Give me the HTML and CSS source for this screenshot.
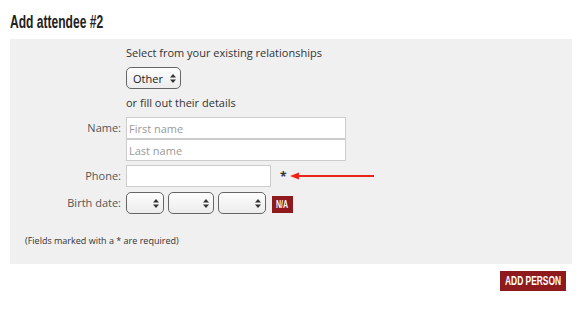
FILE: index.html
```html
<!DOCTYPE html>
<html lang="en">
<head>
    <meta charset="UTF-8">
    <meta name="viewport" content="width=device-width, initial-scale=1.0">
    <title>Add attendee</title>
    <link rel="stylesheet" href="styles.css">
</head>
<body>
    <div class="page">
        <h1><span class="squeeze title">Add attendee #2</span></h1>

        <!-- Attendee form -->
        <div class="attendee-box">
            <div class="form-grid">
                <div></div>
                <div class="text-row">Select from your existing relationships</div>

                <div></div>
                <div class="select-row">
                    <span class="select-wrap w-other">
                        <select><option>Other</option></select>
                        <svg class="updown" width="6" height="9" viewBox="0 0 6 9"><path d="M0 3.5L3 0L6 3.5Z M0 5.5L3 9L6 5.5Z" fill="#333"/></svg>
                    </span>
                </div>

                <div></div>
                <div class="text-row">or fill out their details</div>

                <label class="label">Name:</label>
                <div class="name-fields">
                    <input type="text" class="input wide" placeholder="First name">
                    <input type="text" class="input wide" placeholder="Last name">
                </div>

                <label class="label">Phone:</label>
                <div class="phone-row">
                    <input type="text" class="input phone">
                    <span class="required">*</span>
                    <svg class="arrow" width="84" height="10" viewBox="0 0 84 10">
                        <path d="M0 5L9 1.5L9 8.5Z" fill="#ee2218"/>
                        <rect x="8" y="4" width="76" height="2" fill="#ee2218"/>
                    </svg>
                </div>

                <label class="label date-label">Birth date:</label>
                <div class="date-row">
                    <span class="select-wrap w-day">
                        <select><option></option></select>
                        <svg class="updown" width="6" height="9" viewBox="0 0 6 9"><path d="M0 3.5L3 0L6 3.5Z M0 5.5L3 9L6 5.5Z" fill="#333"/></svg>
                    </span>
                    <span class="select-wrap w-month">
                        <select><option></option></select>
                        <svg class="updown" width="6" height="9" viewBox="0 0 6 9"><path d="M0 3.5L3 0L6 3.5Z M0 5.5L3 9L6 5.5Z" fill="#333"/></svg>
                    </span>
                    <span class="select-wrap w-year">
                        <select><option></option></select>
                        <svg class="updown" width="6" height="9" viewBox="0 0 6 9"><path d="M0 3.5L3 0L6 3.5Z M0 5.5L3 9L6 5.5Z" fill="#333"/></svg>
                    </span>
                    <button class="btn-na"><span class="squeeze">N/A</span></button>
                </div>
            </div>

            <p class="footnote">(Fields marked with a * are required)</p>
        </div>

        <div class="actions">
            <button class="btn-add"><span class="squeeze">ADD PERSON</span></button>
        </div>
    </div>
</body>
</html>
```

FILE: styles.css
```css
body {
    font-family: "Open Sans", Arial, sans-serif;
    background-color: #fff;
    color: #333;
    margin: 0;
    padding: 0;
}
.page {
    padding: 0 12px 0 10px;
}
.squeeze {
    display: inline-block;
    transform: scaleX(0.7);
    transform-origin: left center;
    white-space: nowrap;
}
.title {
    transform: scaleX(0.67);
}
h1 {
    font-family: "Liberation Sans", Arial, sans-serif;
    font-weight: bold;
    font-size: 18px;
    color: #222;
    margin: 0;
    padding: 12px 0 7px;
    line-height: 20px;
    white-space: nowrap;
}
.attendee-box {
    background-color: #f0f0f0;
    padding: 4px 0 1px 10px;
}
.form-grid {
    display: grid;
    grid-template-columns: 101px auto;
    column-gap: 5px;
    font-size: 11px;
}
.text-row {
    line-height: 20px;
    height: 20px;
}
.select-row {
    padding: 4px 0 4px;
}
.label {
    text-align: right;
    color: #555;
    line-height: 20px;
    padding-top: 5px;
}
.date-label {
    padding-top: 6px;
}
.name-fields {
    display: flex;
    flex-direction: column;
    padding-top: 4px;
}
.input {
    box-sizing: border-box;
    height: 22px;
    border: 1px solid #ccc;
    background: #fff;
    font-family: "Open Sans", Arial, sans-serif;
    font-size: 11px;
    padding: 0 2px;
    margin: 0;
    outline: none;
}
.input::placeholder {
    color: #999;
}
.wide {
    width: 220px;
}
.phone-row {
    display: flex;
    align-items: center;
    padding-top: 4px;
}
.phone {
    width: 145px;
}
.required {
    margin-left: 9px;
    font-size: 12px;
    font-weight: bold;
    color: #333;
}
.arrow {
    margin-left: 3px;
}
.date-row {
    display: flex;
    align-items: center;
    gap: 4px;
    padding-top: 5px;
}
.select-wrap {
    position: relative;
    display: inline-block;
    height: 22px;
}
.select-wrap select {
    -webkit-appearance: none;
    appearance: none;
    box-sizing: border-box;
    width: 100%;
    height: 22px;
    border: 1px solid #666;
    border-radius: 5px;
    background: linear-gradient(#fdfdfd, #ececec);
    font-family: "Open Sans", Arial, sans-serif;
    font-size: 11px;
    color: #222;
    padding: 0 14px 0 6px;
    margin: 0;
}
.updown {
    position: absolute;
    right: 5px;
    top: 7px;
    pointer-events: none;
}
.w-other { width: 55px; }
.w-day { width: 38px; }
.w-month { width: 46px; }
.w-year { width: 48px; }
.btn-na {
    margin-left: 2px;
    margin-top: 3px;
    background-color: #8e1a1e;
    color: #fff;
    border: none;
    font-family: "Liberation Sans", Arial, sans-serif;
    font-weight: bold;
    font-size: 10px;
    height: 17px;
    width: 21px;
    padding: 0 0 0 4px;
    text-align: left;
}
.footnote {
    font-size: 9px;
    margin: 20px 0 16px 5px;
    color: #333;
}
.actions {
    display: flex;
    justify-content: flex-end;
    padding: 7px 6px 0 0;
}
.btn-add {
    background-color: #8e1a1e;
    color: #fff;
    border: none;
    font-family: "Liberation Sans", Arial, sans-serif;
    font-weight: bold;
    font-size: 12px;
    height: 20px;
    width: 66px;
    padding: 0 0 0 5px;
    text-align: left;
}
```
